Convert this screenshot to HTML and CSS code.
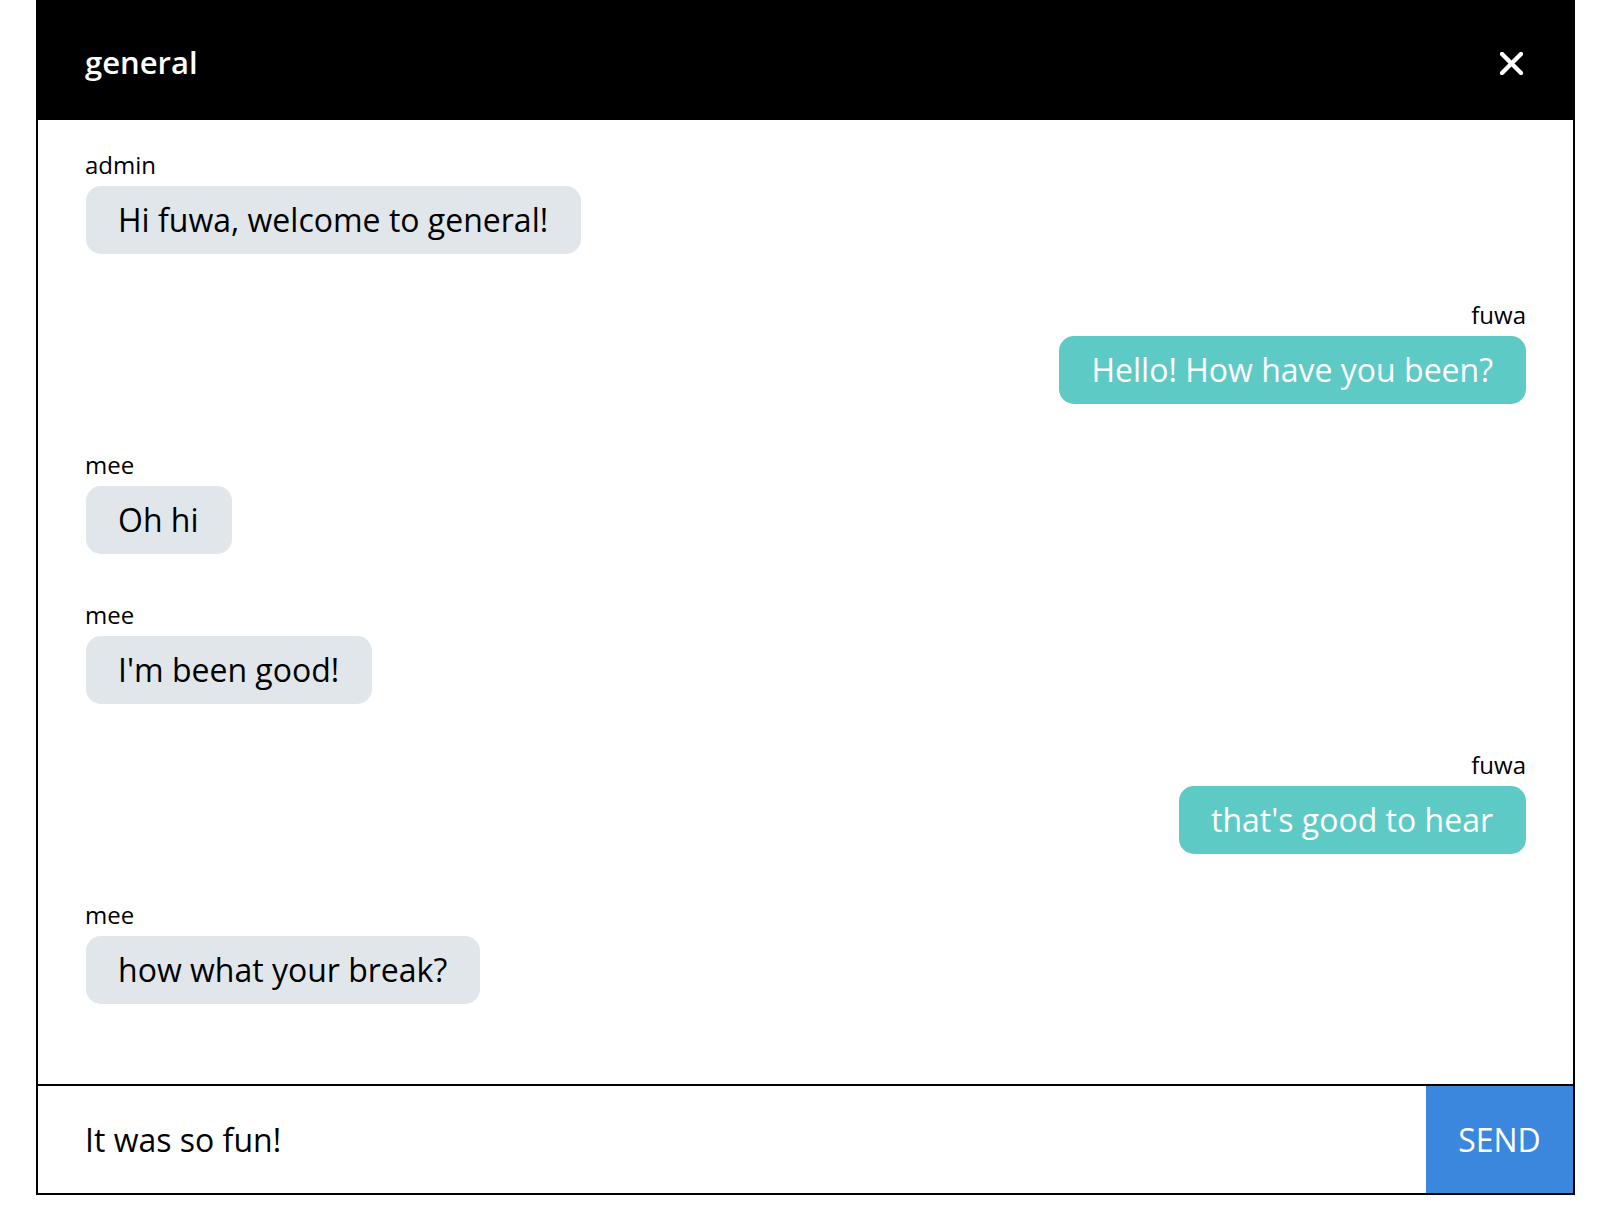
FILE: index.html
```html
<!DOCTYPE html>
<html lang="en">
<head>
<meta charset="utf-8">
<title>general</title>
<link rel="stylesheet" href="styles.css">
</head>
<body>
<div class="chat">
  <header class="chat-header">
    <h1 class="chat-title">general</h1>
    <button class="close-btn" aria-label="Close">
      <svg width="23" height="23" viewBox="0 0 23 23"><path d="M2 2 L21 21 M21 2 L2 21" stroke="#fff" stroke-width="4.3" stroke-linecap="square" fill="none"/></svg>
    </button>
  </header>
  <main class="messages">
    <div class="msg other">
      <div class="sender">admin</div>
      <div class="bubble">Hi fuwa, welcome to general!</div>
    </div>
    <div class="msg me">
      <div class="sender">fuwa</div>
      <div class="bubble">Hello! How have you been?</div>
    </div>
    <div class="msg other">
      <div class="sender">mee</div>
      <div class="bubble">Oh hi</div>
    </div>
    <div class="msg other">
      <div class="sender">mee</div>
      <div class="bubble">I'm been good!</div>
    </div>
    <div class="msg me">
      <div class="sender">fuwa</div>
      <div class="bubble">that's good to hear</div>
    </div>
    <div class="msg other">
      <div class="sender">mee</div>
      <div class="bubble">how what your break?</div>
    </div>
  </main>
  <footer class="composer">
    <div class="input">It was so fun!</div>
    <button class="send-btn">SEND</button>
  </footer>
</div>
</body>
</html>
```
FILE: styles.css
```css
* { box-sizing: border-box; }
html, body { margin: 0; padding: 0; background: #fff; }
body { font-family: "Open Sans", "Noto Sans", sans-serif; color: #000; }

.chat {
  width: 1539px;
  height: 1195px;
  margin: 0 0 0 36px;
  border: 2px solid #000;
  border-top: 0;
  display: flex;
  flex-direction: column;
}

.chat-header {
  background: #000;
  color: #fff;
  height: 120px;
  margin: 0 -2px;
  padding: 0 52px 0 49px;
  display: flex;
  align-items: center;
  justify-content: space-between;
  flex-shrink: 0;
}
.chat-title {
  margin: 0;
  font-size: 31px;
  font-weight: 600;
  line-height: 1;
  padding-top: 5px;
}
.close-btn {
  background: none;
  border: 0;
  padding: 0;
  display: flex;
  margin-top: 6px;
}

.messages {
  flex: 1;
  padding: 28px 47px 0 47px;
  display: flex;
  flex-direction: column;
  gap: 44px;
}
.msg { display: flex; flex-direction: column; align-items: flex-start; }
.msg.me { align-items: flex-end; }
.sender {
  font-size: 24px;
  line-height: 33px;
  margin-bottom: 5px;
}
.bubble {
  font-size: 32px;
  line-height: 44px;
  padding: 12px 33px 12px 32px;
  border-radius: 15px;
  background: #e1e6ea;
}
.msg.other .bubble { margin-left: 1px; }
.msg.me .bubble { background: #5ecac6; color: #fff; }

.composer {
  height: 109px;
  border-top: 2px solid #000;
  display: flex;
  flex-shrink: 0;
}
.input {
  flex: 1;
  font-size: 32px;
  padding-left: 47px;
  display: flex;
  align-items: center;
}
.send-btn {
  width: 147px;
  border: 0;
  background: #3b87dd;
  color: #fff;
  font-family: inherit;
  font-size: 32px;
  padding: 0;
}
```
